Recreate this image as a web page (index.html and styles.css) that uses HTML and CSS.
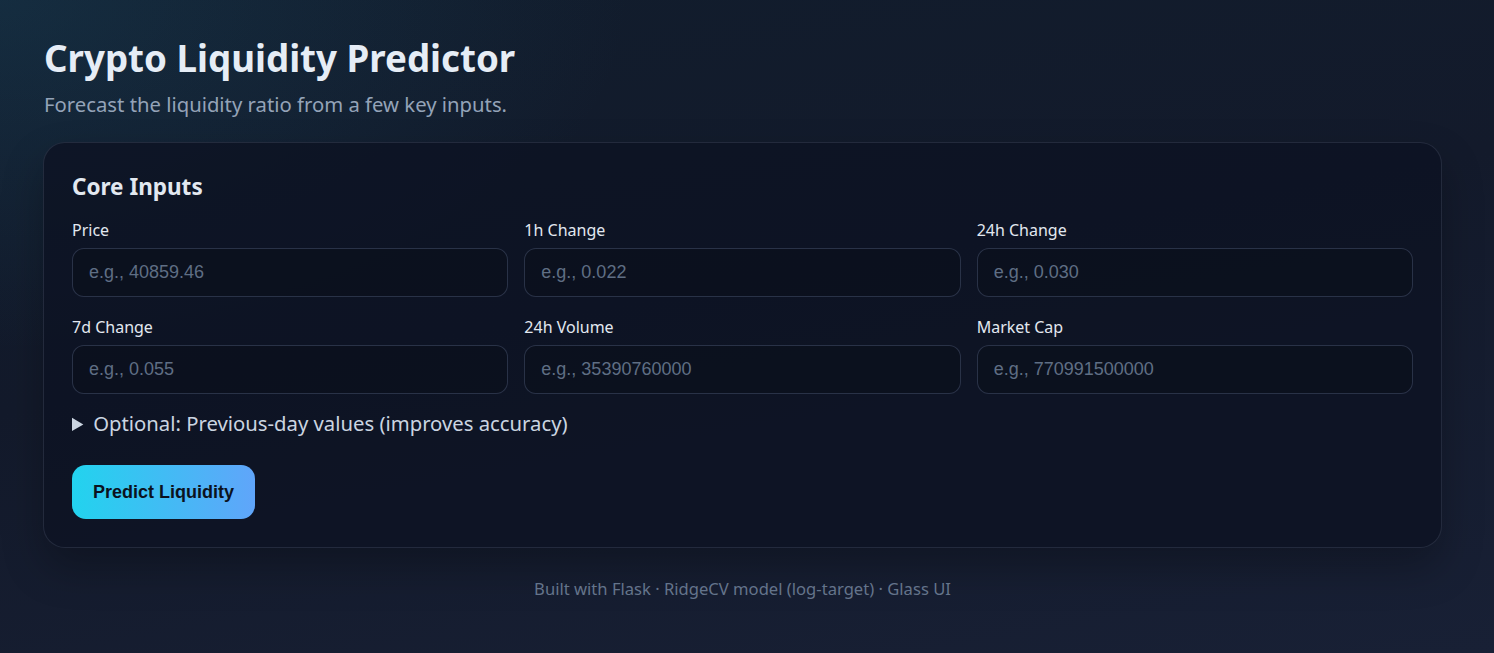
FILE: index.html
```html
<!DOCTYPE html>
<html lang="en">
<head>
<meta charset="utf-8">
<title>Crypto Liquidity Predictor</title>
<link rel="stylesheet" href="styles.css">
</head>
<body>
<main class="container">
  <header class="hero">
    <h1 class="title">Crypto Liquidity Predictor</h1>
    <p class="subtitle">Forecast the liquidity ratio from a few key inputs.</p>
  </header>
  <form class="card">
    <h2 class="card-title">Core Inputs</h2>
    <div class="grid">
      <label class="field"><span class="label">Price</span><input class="input" type="text" placeholder="e.g., 40859.46"></label>
      <label class="field"><span class="label">1h Change</span><input class="input" type="text" placeholder="e.g., 0.022"></label>
      <label class="field"><span class="label">24h Change</span><input class="input" type="text" placeholder="e.g., 0.030"></label>
      <label class="field"><span class="label">7d Change</span><input class="input" type="text" placeholder="e.g., 0.055"></label>
      <label class="field"><span class="label">24h Volume</span><input class="input" type="text" placeholder="e.g., 35390760000"></label>
      <label class="field"><span class="label">Market Cap</span><input class="input" type="text" placeholder="e.g., 770991500000"></label>
    </div>
    <details class="optional">
      <summary class="summary">Optional: Previous-day values (improves accuracy)</summary>
    </details>
    <button class="btn" type="button">Predict Liquidity</button>
  </form>
  <footer class="footer">Built with Flask · RidgeCV model (log-target) · Glass UI</footer>
</main>
</body>
</html>
```
FILE: styles.css
```css
* { box-sizing: border-box; }
html, body { height: 100%; }
body {
  margin: 0;
  min-height: 100vh;
  font-family: "Noto Sans", "Open Sans", sans-serif;
  color: #e2e8f0;
  background:
    radial-gradient(900px 500px at 0% 0%, rgba(34, 100, 130, 0.22), transparent 70%),
    linear-gradient(170deg, #111d2d 0%, #131a2b 45%, #182035 100%);
  background-color: #151c2e;
}
.container {
  width: 1399px;
  margin-left: 43px;
  padding-top: 34px;
}
.hero { padding-left: 1px; }
.title {
  margin: 0;
  font-size: 36.7px;
  line-height: 48px;
  font-weight: 700;
  color: #e6edf6;
}
.subtitle {
  margin: 8px 0 0;
  font-size: 20.3px;
  line-height: 28px;
  color: #94a3b8;
}
.card {
  margin-top: 24px;
  background: rgba(13, 19, 35, 0.85);
  border: 1px solid rgba(148, 163, 184, 0.16);
  border-radius: 22px;
  padding: 28px 28px 28px;
  box-shadow: 0 20px 40px rgba(0, 0, 0, 0.25);
}
.card-title {
  margin: 0 0 16px;
  font-size: 22.5px;
  line-height: 32px;
  font-weight: 700;
  color: #e2e8f0;
}
.grid {
  display: grid;
  grid-template-columns: repeat(3, 1fr);
  column-gap: 16px;
  row-gap: 19px;
}
.field { display: flex; flex-direction: column; gap: 7px; }
.label { font-size: 16px; line-height: 22px; color: #e2e8f0; }
.input {
  height: 49px;
  padding: 0 16px;
  border-radius: 12px;
  border: 1px solid rgba(100, 116, 150, 0.35);
  background: rgba(10, 15, 27, 0.6);
  color: #e2e8f0;
  font-family: "Liberation Sans", Arial, sans-serif;
  font-size: 18px;
}
.input::placeholder { color: #5f6e84; }
.optional { margin-top: 15px; }
.summary {
  font-size: 20.3px;
  line-height: 28px;
  color: #cbd5e1;
  cursor: pointer;
}
.summary::marker { font-size: 20px; }
.btn {
  margin-top: 27px;
  display: block;
  height: 54px;
  padding: 0 21px;
  border: 0;
  border-radius: 14px;
  background: linear-gradient(90deg, #22d3ee, #60a5fa);
  color: #0b1220;
  font-family: "Liberation Sans", Arial, sans-serif;
  font-size: 18px;
  font-weight: 700;
}
.footer {
  margin-top: 29px;
  text-align: center;
  font-size: 16.6px;
  color: #64748b;
}
```
